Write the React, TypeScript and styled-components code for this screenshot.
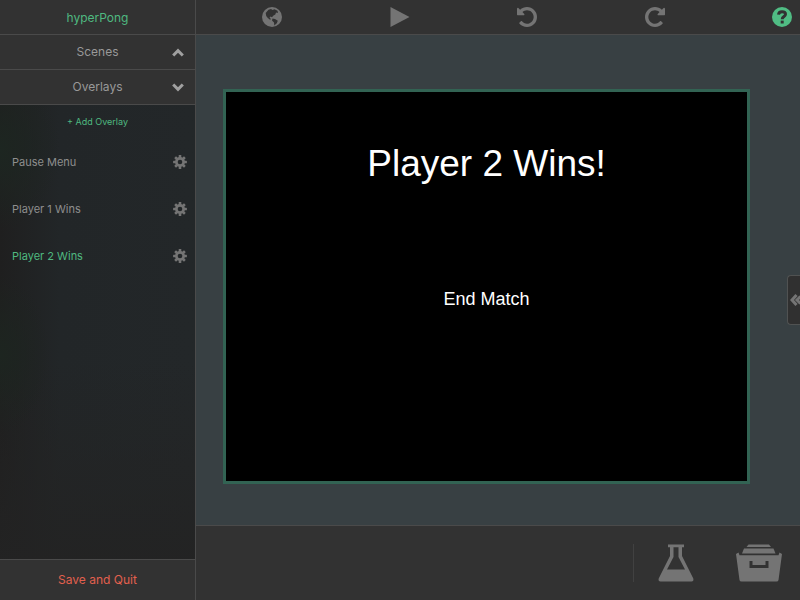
import React from 'react';
import styled, { createGlobalStyle } from 'styled-components';

const GlobalStyle = createGlobalStyle`
  *, *::before, *::after { box-sizing: border-box; }
  body {
    margin: 0;
    background: #323232;
    font-family: Inter, "Liberation Sans", sans-serif;
    color: #999;
  }
  button {
    margin: 0;
    padding: 0;
    border: 0;
    background: none;
    font: inherit;
    color: inherit;
    cursor: pointer;
  }
  svg { display: block; }
`;

const line = '#4a4a4a';
const bar = '#323232';
const green = '#4fb980';

const Shell = styled.div`
  display: grid;
  grid-template-columns: 196px minmax(0, 1fr);
  min-height: 100vh;
`;

const Sidebar = styled.aside`
  display: flex;
  flex-direction: column;
  border-right: 1px solid ${line};
  background: radial-gradient(ellipse 60px 80px at 0 150px, #1d2621, transparent),
    radial-gradient(ellipse 50px 80px at 0 355px, #1d2520, transparent),
    linear-gradient(to bottom, transparent 60%, #232323 95%),
    linear-gradient(to right, #1f1f1f, #222628 60px, #232729);
`;

const ProjectName = styled.h1`
  margin: 0;
  height: 35px;
  border-bottom: 1px solid ${line};
  background: ${bar};
  color: ${green};
  font-size: 12px;
  font-weight: 400;
  line-height: 35px;
  text-align: center;
`;

const SectionButton = styled.button`
  display: grid;
  grid-template-columns: 35px 1fr 35px;
  align-items: center;
  flex: none;
  height: 35px;
  border-bottom: 1px solid ${line};
  background: ${bar};
  font-size: 12px;
  line-height: 16px;

  span { grid-column: 2; }
  svg { justify-self: center; }
`;

const AddButton = styled.button`
  height: 33px;
  color: ${green};
  font-size: 9px;
  line-height: 12px;
`;

const OverlayList = styled.ul`
  flex: 1;
  margin: 0;
  padding: 0;
  list-style: none;
`;

const OverlayRow = styled.li`
  display: flex;
  align-items: center;
  justify-content: space-between;
  height: 47px;
  padding: 0 8px 0 12px;
`;

const OverlayName = styled.button<{ $active: boolean }>`
  color: ${(p) => (p.$active ? green : '#8e8e8e')};
  font-size: 11px;
  line-height: 16px;
`;

const IconButton = styled.button`
  flex: none;
  color: #747474;
`;

const QuitButton = styled.button`
  height: 41px;
  padding-bottom: 2px;
  border-top: 1px solid ${line};
  background: ${bar};
  color: #e2604e;
  font-size: 12px;
`;

const Main = styled.main`
  position: relative;
  display: flex;
  flex-direction: column;
`;

const TopBar = styled.header`
  display: flex;
  align-items: center;
  justify-content: space-between;
  height: 35px;
  padding: 0 8px 0 66px;
  border-bottom: 1px solid ${line};
  background: ${bar};
`;

const Workspace = styled.section`
  display: flex;
  flex: 1;
  padding: 54px 50px 41px 27px;
  background: #384043;
`;

const Stage = styled.div`
  display: flex;
  flex: 1;
  flex-direction: column;
  align-items: center;
  gap: 102px;
  padding-top: 50px;
  border: 3px solid #326353;
  background: #000;
  color: #fff;
  font-family: "Liberation Sans", Arial, sans-serif;
`;

const StageTitle = styled.h2`
  margin: 0;
  font-size: 37px;
  font-weight: 400;
  line-height: 44px;
`;

const StageButton = styled.button`
  font-size: 18px;
  line-height: 22px;
`;

const DrawerHandle = styled.button`
  position: absolute;
  top: 275px;
  right: 0;
  display: flex;
  align-items: center;
  width: 13px;
  height: 50px;
  padding-left: 2px;
  border: 1px solid #505252;
  border-right: 0;
  border-radius: 4px 0 0 4px;
  background: #303030;
  color: #747474;
`;

const BottomBar = styled.footer`
  display: flex;
  align-items: center;
  justify-content: flex-end;
  gap: 42px;
  height: 75px;
  padding-right: 18px;
  border-top: 1px solid ${line};
  background: ${bar};
`;

const LabGroup = styled.div`
  display: flex;
  padding-left: 24px;
  border-left: 1px solid #414141;
`;

const Chevron = ({ up = false }: { up?: boolean }) => (
  <svg width="12" height="9" viewBox="0 0 12 9" fill="none" stroke="#a0a0a0" strokeWidth="3" aria-hidden="true">
    <path d={up ? 'M1.2 7.500 6 2.700 10.800 7.500' : 'M1.2 1.500 6 6.300 10.800 1.500'} />
  </svg>
);

const Gear = () => (
  <svg width="14" height="14" viewBox="0 0 14 14" fill="currentColor" aria-hidden="true">
    {[0, 45, 90, 135].map((a) => (
      <rect key={a} x="5.7" y="0.1" width="2.6" height="13.8" rx="0.5" transform={`rotate(${a} 7 7)`} />
    ))}
    <circle cx="7" cy="7" r="4.9" />
    <circle cx="7" cy="7" r="2.3" fill="#232729" />
  </svg>
);

const Globe = () => (
  <svg width="20" height="20" viewBox="0 0 20 20" aria-hidden="true">
    <circle cx="10" cy="10" r="10" fill="currentColor" />
    <path fill={bar} d="M6.500 2.800 9 2 10.500 3 12.500 2.300 15.500 3.800 16 6 14 5.500 13.300 7.500 11.500 8.500 10 10.300 8.500 9.500 7.500 10.800 9 12 8 12.800 5.800 11 4.200 9 3.700 6ZM10.500 11.500 13 12 15.800 13.800 14.800 16.300 12.300 18.500 12 15.500 10 13.500Z" />
  </svg>
);

const Play = () => (
  <svg width="20" height="20" viewBox="0 0 20 20" fill="currentColor" aria-hidden="true">
    <path d="M.5 0 19.500 10 .5 20Z" />
  </svg>
);

const Undo = ({ flipped = false }: { flipped?: boolean }) => (
  <svg width="20" height="20" viewBox="0 128 1536 1536" fill="currentColor" aria-hidden="true">
    <path
      transform={flipped ? 'translate(1536 0) scale(-1 1)' : undefined}
      d="M1536 896q0 156-61 298t-164 245-245 164-298 61q-172 0-327-72.5t-264-204.5q-7-10-6.5-22.5t8.5-20.5l137-138q10-9 25-9 16 2 23 12 73 95 179 147t225 52q104 0 198.5-40.5t163.5-109.5 109.5-163.5 40.5-198.5-40.5-198.5-109.5-163.5-163.5-109.5-198.5-40.5q-98 0-188 35.5t-160 101.500l137 138q31 30 14 69-17 40-59 40h-448q-26 0-45-19t-19-45v-448q0-42 40-59 39-17 69 14l130 129q107-101 244.500-156.500t284.500-55.500q156 0 298 61t245 164 164 245 61 298z"
    />
  </svg>
);

const Help = () => (
  <svg width="20" height="20" viewBox="0 0 20 20" fill="none" aria-hidden="true">
    <circle cx="10" cy="10" r="10" fill="#50bd84" />
    <path d="M6.500 7.600C6.700 5.400 8.100 4.700 10 4.700 12.200 4.700 13.500 5.800 13.500 7.300 13.500 9.500 10.200 9.500 10.200 12.200" stroke={bar} strokeWidth="3" />
    <rect x="8.700" y="13.600" width="3" height="2.900" fill={bar} />
  </svg>
);

const Flask = () => (
  <svg width="36" height="38" viewBox="0 0 36 38" aria-hidden="true">
    <path fill="currentColor" fillRule="evenodd" d="M10 .5H26V3.2H24V12L35.3 34.500Q36 37.500 33.500 37.500H2.500Q0 37.500.7 34.500L12 12V3.200H10ZM15.500 3.200V13L9 25.500H27L20.500 13V3.200Z" />
  </svg>
);

const FileBox = () => (
  <svg width="46" height="38" viewBox="0 0 46 38" aria-hidden="true">
    <g fill="currentColor">
      <path d="M12.500 .5H33L35 3H10.500Z" />
      <path d="M8 4.500H37.500L39.500 9.500H6Z" />
      <path d="M0 10 2.500 8.500 3.500 11.200H42.500L43.500 8.500 46 10 42.500 36Q42.200 37.500 40.500 37.500H5.500Q3.800 37.500 3.500 36Z" />
    </g>
    <path d="M15 17V22.500H31V17" fill="none" stroke={bar} strokeWidth="3" />
  </svg>
);

const DoubleLeft = () => (
  <svg width="10" height="14" viewBox="0 0 10 14" fill="none" stroke="currentColor" strokeWidth="3" aria-hidden="true">
    <path d="M6.500 2 2 7 6.500 12M10.500 3.500 7 7 10.500 10.500" />
  </svg>
);

const overlays = ['Pause Menu', 'Player 1 Wins', 'Player 2 Wins'];

export default function App() {
  return (
    <>
      <GlobalStyle />
      <Shell>
        <Sidebar>
          <ProjectName>hyperPong</ProjectName>
          <SectionButton aria-expanded="false"><span>Scenes</span><Chevron up /></SectionButton>
          <SectionButton aria-expanded="true"><span>Overlays</span><Chevron /></SectionButton>
          <AddButton>+ Add Overlay</AddButton>
          <OverlayList>
            {overlays.map((name) => (
              <OverlayRow key={name}>
                <OverlayName $active={name === 'Player 2 Wins'}>{name}</OverlayName>
                <IconButton aria-label={`${name} settings`}><Gear /></IconButton>
              </OverlayRow>
            ))}
          </OverlayList>
          <QuitButton>Save and Quit</QuitButton>
        </Sidebar>
        <Main>
          <TopBar>
            <IconButton aria-label="Publish"><Globe /></IconButton>
            <IconButton aria-label="Play"><Play /></IconButton>
            <IconButton aria-label="Undo"><Undo /></IconButton>
            <IconButton aria-label="Redo"><Undo flipped /></IconButton>
            <IconButton aria-label="Help"><Help /></IconButton>
          </TopBar>
          <Workspace>
            <Stage>
              <StageTitle>Player 2 Wins!</StageTitle>
              <StageButton>End Match</StageButton>
            </Stage>
          </Workspace>
          <BottomBar>
            <LabGroup><IconButton aria-label="Lab"><Flask /></IconButton></LabGroup>
            <IconButton aria-label="Library"><FileBox /></IconButton>
          </BottomBar>
          <DrawerHandle aria-label="Open drawer"><DoubleLeft /></DrawerHandle>
        </Main>
      </Shell>
    </>
  );
}
